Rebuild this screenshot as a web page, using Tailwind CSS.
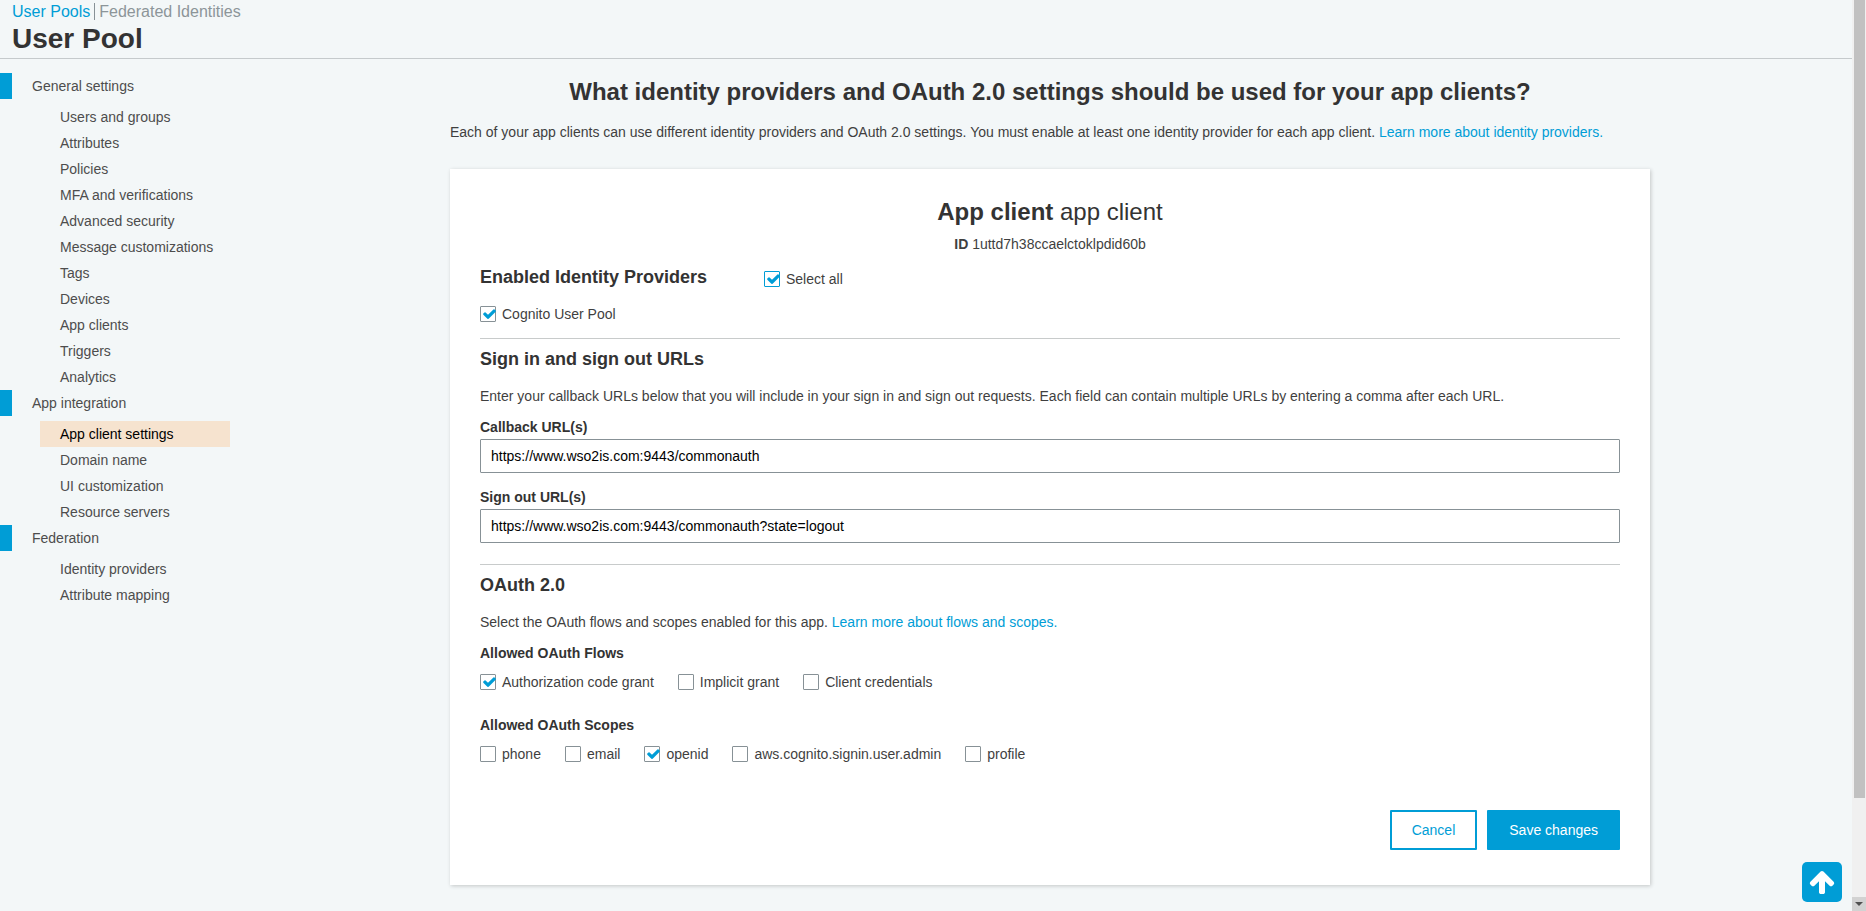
<!DOCTYPE html>
<html lang="en">
<head>
<meta charset="utf-8">
<title>User Pool</title>
<script src="https://cdn.jsdelivr.net/npm/@tailwindcss/browser@4"></script>
</head>
<body class="flex h-screen overflow-hidden bg-[#f3f7f8] font-['Liberation_Sans',Arial,sans-serif] text-sm leading-5 text-[#3f3f3f]">
<svg class="hidden" aria-hidden="true">
  <symbol id="check" viewBox="121 310 1550 1212"><path d="M1671 566q0 40-28 68l-724 724-136 136q-28 28-68 28t-68-28l-136-136-362-362q-28-28-28-68t28-68l136-136q28-28 68-28t68 28l294 295 656-657q28-28 68-28t68 28l136 136q28 28 28 68z"/></symbol>
</svg>
<div class="flex min-w-0 flex-1 flex-col">
  <header class="border-b border-[#c5cacc] px-3 pt-[3px] pb-[3px]">
    <nav class="flex text-base leading-[17px]">
      <a href="#" class="mr-1 text-[#009dd6]">User Pools</a>
      <a href="#" class="border-l border-[#879196] pl-1 text-[#8c9599]">Federated Identities</a>
    </nav>
    <h1 class="mt-[3px] text-[28px] leading-8 font-bold text-[#333]">User Pool</h1>
  </header>
  <div class="flex flex-1">
    <nav class="w-[248px] shrink-0 pt-[14px] leading-[26px] text-[#4d4d4d]">
      <a href="#" class="mb-[5px] block border-l-[12px] border-[#009dd6] pl-5">General settings</a>
      <ul class="mr-[18px] ml-10">
        <li><a href="#" class="block pl-5">Users and groups</a></li>
        <li><a href="#" class="block pl-5">Attributes</a></li>
        <li><a href="#" class="block pl-5">Policies</a></li>
        <li><a href="#" class="block pl-5">MFA and verifications</a></li>
        <li><a href="#" class="block pl-5">Advanced security</a></li>
        <li><a href="#" class="block pl-5">Message customizations</a></li>
        <li><a href="#" class="block pl-5">Tags</a></li>
        <li><a href="#" class="block pl-5">Devices</a></li>
        <li><a href="#" class="block pl-5">App clients</a></li>
        <li><a href="#" class="block pl-5">Triggers</a></li>
        <li><a href="#" class="block pl-5">Analytics</a></li>
      </ul>
      <a href="#" class="mb-[5px] block border-l-[12px] border-[#009dd6] pl-5">App integration</a>
      <ul class="mr-[18px] ml-10">
        <li><a href="#" aria-current="page" class="block bg-[#f6e3cf] pl-5 text-black">App client settings</a></li>
        <li><a href="#" class="block pl-5">Domain name</a></li>
        <li><a href="#" class="block pl-5">UI customization</a></li>
        <li><a href="#" class="block pl-5">Resource servers</a></li>
      </ul>
      <a href="#" class="mb-[5px] block border-l-[12px] border-[#009dd6] pl-5">Federation</a>
      <ul class="mr-[18px] ml-10">
        <li><a href="#" class="block pl-5">Identity providers</a></li>
        <li><a href="#" class="block pl-5">Attribute mapping</a></li>
      </ul>
    </nav>
    <main class="min-w-0 flex-1 pt-[17px]">
      <div class="mx-auto max-w-[1200px]">
        <h2 class="text-center text-2xl leading-8 font-bold text-[#333]">What identity providers and OAuth 2.0 settings should be used for your app clients?</h2>
        <p class="mt-[14px]">Each of your app clients can use different identity providers and OAuth 2.0 settings. You must enable at least one identity provider for each app client. <a href="#" class="text-[#009dd6]">Learn more about identity providers.</a></p>
        <form class="mt-[27px] bg-white px-[30px] pt-[27px] pb-[35px] shadow-[1px_1px_4px_rgba(0,0,0,0.2)]">
          <h3 class="text-center text-2xl leading-8 font-normal text-[#333]"><b>App client</b> app client</h3>
          <p class="mt-[6px] text-center"><b>ID</b> 1uttd7h38ccaelctoklpdid60b</p>
          <div class="mt-[11px] flex">
            <h4 class="w-[284px] text-lg leading-6 font-bold text-[#333]">Enabled Identity Providers</h4>
            <label class="mt-1 flex items-center gap-[6px]">
              <span class="grid size-4">
                <input type="checkbox" checked class="peer col-start-1 row-start-1 size-4 appearance-none rounded-[1px] border border-[#009dd6] bg-white">
                <svg class="invisible col-start-1 row-start-1 mt-[3px] ml-[3px] h-[10px] w-[13px] fill-[#009dd6] peer-checked:visible"><use href="#check"/></svg>
              </span>Select all</label>
          </div>
          <div class="mt-[15px] flex">
            <label class="flex items-center gap-[6px]">
              <span class="grid size-4">
                <input type="checkbox" checked class="peer col-start-1 row-start-1 size-4 appearance-none rounded-[1px] border border-[#879196] bg-white">
                <svg class="invisible col-start-1 row-start-1 mt-[3px] ml-[3px] h-[10px] w-[13px] fill-[#009dd6] peer-checked:visible"><use href="#check"/></svg>
              </span>Cognito User Pool</label>
          </div>
          <hr class="mt-[14px] border-[#c8cbcb]">
          <h4 class="mt-2 text-lg leading-6 font-bold text-[#333]">Sign in and sign out URLs</h4>
          <p class="mt-[15px]">Enter your callback URLs below that you will include in your sign in and sign out requests. Each field can contain multiple URLs by entering a comma after each URL.</p>
          <label for="callback" class="mt-[11px] block font-bold text-[#333]">Callback URL(s)</label>
          <input id="callback" type="text" value="https://www.wso2is.com:9443/commonauth" class="mt-[2px] block h-[34px] w-full rounded-[1px] border border-[#879196] bg-white px-[10px] text-black">
          <label for="signout" class="mt-[14px] block font-bold text-[#333]">Sign out URL(s)</label>
          <input id="signout" type="text" value="https://www.wso2is.com:9443/commonauth?state=logout" class="mt-[2px] block h-[34px] w-full rounded-[1px] border border-[#879196] bg-white px-[10px] text-black">
          <hr class="mt-[21px] border-[#c8cbcb]">
          <h4 class="mt-2 text-lg leading-6 font-bold text-[#333]">OAuth 2.0</h4>
          <p class="mt-[15px]">Select the OAuth flows and scopes enabled for this app. <a href="#" class="text-[#009dd6]">Learn more about flows and scopes.</a></p>
          <fieldset class="mt-[11px]">
            <legend class="font-bold text-[#333]">Allowed OAuth Flows</legend>
            <div class="mt-[9px] flex gap-6">
              <label class="flex items-center gap-[6px]">
                <span class="grid size-4">
                  <input type="checkbox" checked class="peer col-start-1 row-start-1 size-4 appearance-none rounded-[1px] border border-[#879196] bg-white">
                  <svg class="invisible col-start-1 row-start-1 mt-[3px] ml-[3px] h-[10px] w-[13px] fill-[#009dd6] peer-checked:visible"><use href="#check"/></svg>
                </span>Authorization code grant</label>
              <label class="flex items-center gap-[6px]"><input type="checkbox" class="size-4 appearance-none rounded-[1px] border border-[#879196] bg-white">Implicit grant</label>
              <label class="flex items-center gap-[6px]"><input type="checkbox" class="size-4 appearance-none rounded-[1px] border border-[#879196] bg-white">Client credentials</label>
            </div>
          </fieldset>
          <fieldset class="mt-[23px]">
            <legend class="font-bold text-[#333]">Allowed OAuth Scopes</legend>
            <div class="mt-[9px] flex gap-6">
              <label class="flex items-center gap-[6px]"><input type="checkbox" class="size-4 appearance-none rounded-[1px] border border-[#879196] bg-white">phone</label>
              <label class="flex items-center gap-[6px]"><input type="checkbox" class="size-4 appearance-none rounded-[1px] border border-[#879196] bg-white">email</label>
              <label class="flex items-center gap-[6px]">
                <span class="grid size-4">
                  <input type="checkbox" checked class="peer col-start-1 row-start-1 size-4 appearance-none rounded-[1px] border border-[#879196] bg-white">
                  <svg class="invisible col-start-1 row-start-1 mt-[3px] ml-[3px] h-[10px] w-[13px] fill-[#009dd6] peer-checked:visible"><use href="#check"/></svg>
                </span>openid</label>
              <label class="flex items-center gap-[6px]"><input type="checkbox" class="size-4 appearance-none rounded-[1px] border border-[#879196] bg-white">aws.cognito.signin.user.admin</label>
              <label class="flex items-center gap-[6px]"><input type="checkbox" class="size-4 appearance-none rounded-[1px] border border-[#879196] bg-white">profile</label>
            </div>
          </fieldset>
          <div class="mt-[46px] flex justify-end gap-[10px]">
            <button type="button" class="h-10 rounded-[1px] border-2 border-[#009dd6] bg-white px-5 text-[#009dd6]">Cancel</button>
            <button type="submit" class="h-10 rounded-[1px] border-2 border-[#009dd6] bg-[#009dd6] px-5 text-white">Save changes</button>
          </div>
        </form>
      </div>
    </main>
  </div>
</div>
<button type="button" aria-label="Back to top" class="fixed right-6 bottom-[9px] grid size-10 place-items-center rounded-[5px] bg-[#009dd6]">
  <svg viewBox="0 0 1792 1792" class="size-7 fill-white"><path d="M1675 971q0 51-37 90l-75 75q-38 38-91 38-54 0-90-38l-294-293v704q0 52-37.500 84.500t-90.500 32.500h-128q-53 0-90.500-32.500t-37.500-84.500v-704l-294 293q-36 38-90 38t-90-38l-75-75q-38-38-38-90 0-53 38-91l651-651q35-37 90-37 54 0 91 37l651 651q37 39 37 91z"/></svg>
</button>
<div class="flex w-[14px] shrink-0 flex-col bg-[#f0f0f0]" aria-hidden="true">
  <div class="mr-px ml-[2px] h-[798px] bg-[#c1c1c1]"></div>
  <div class="mt-auto grid h-[14px] place-items-center bg-[#d2d2d2]">
    <svg viewBox="0 0 8 4" class="h-1 w-2 fill-[#505050]"><path d="M0 0h8L4 4z"/></svg>
  </div>
</div>
</body>
</html>
